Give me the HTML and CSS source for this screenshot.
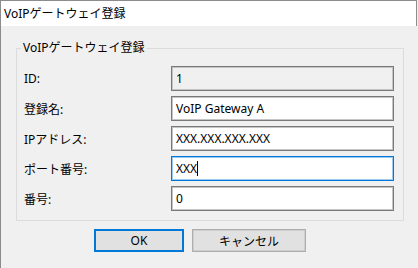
FILE: index.html
```html
<!DOCTYPE html>
<html lang="ja">
<head>
    <meta charset="UTF-8">
    <meta name="viewport" content="width=device-width, initial-scale=1.0">
    <title>VoIPゲートウェイ登録</title>
    <link rel="stylesheet" href="styles.css">
</head>
<body>
    <div class="window">
        <div class="titlebar">VoIPゲートウェイ登録</div>
        <div class="content">
            <fieldset class="group">
                <legend>VoIPゲートウェイ登録</legend>
                <div class="rows">
                    <label for="gwId">ID:</label>
                    <input id="gwId" class="field" type="text" value="1" readonly>

                    <label for="gwName">登録名:</label>
                    <input id="gwName" class="field" type="text" value="VoIP Gateway A">

                    <label for="gwIp">IPアドレス:</label>
                    <input id="gwIp" class="field" type="text" value="XXX.XXX.XXX.XXX">

                    <label for="gwPort">ポート番号:</label>
                    <div class="field focused" id="gwPort">XXX<span class="caret"></span></div>

                    <label for="gwNo">番号:</label>
                    <input id="gwNo" class="field" type="text" value="0">
                </div>
            </fieldset>
            <div class="buttons">
                <button class="btn btn-ok">OK</button>
                <button class="btn btn-cancel">キャンセル</button>
            </div>
        </div>
    </div>
</body>
</html>
```

FILE: styles.css
```css
* {
    margin: 0;
    padding: 0;
    box-sizing: border-box;
}

body {
    width: 418px;
    height: 268px;
    overflow: hidden;
    background: #f0f0f0;
    font-family: "Noto Sans", "Noto Sans CJK JP", sans-serif;
    font-size: 12px;
    color: #000;
}

.window {
    height: 268px;
    border-left: 1px solid #8c8c8c;
}

.titlebar {
    height: 26px;
    width: 416px;
    background: #fff;
    border-top: 1px solid #8c8c8c;
    border-right: 1px solid #8c8c8c;
    padding: 3px 0 0 3px;
    line-height: 20px;
}

.content {
    padding-top: 15px;
}

.group {
    margin-left: 15px;
    width: 388px;
    border: 1px solid #dcdcdc;
    padding: 0;
}

.group legend {
    margin-left: 4px;
    padding: 0 2px;
    line-height: 14px;
}

.rows {
    display: grid;
    grid-template-columns: 147px 223px;
    row-gap: 5px;
    align-items: center;
    padding: 11px 9px 9px 7px;
}

.field {
    height: 25px;
    border: 1px solid #7a7a7a;
    box-shadow: inset 0 0 0 1px #c4c4c4;
    background: #fff;
    padding: 0 4px;
    font: inherit;
    color: #000;
    line-height: 23px;
    outline: none;
}

.field[readonly] {
    background: #f0f0f0;
}

.field.focused {
    border-color: #0078d7;
    box-shadow: inset 0 0 0 1px #9ccaf0;
}

.caret {
    display: inline-block;
    width: 1px;
    height: 15px;
    background: #000;
    vertical-align: -3px;
}

.buttons {
    display: flex;
    gap: 8px;
    margin: 8px 0 0 93px;
}

.btn {
    height: 23px;
    background: #e1e1e1;
    border: 1px solid #adadad;
    box-shadow: inset 0 0 0 1px #cfcfcf;
    font: inherit;
    color: #000;
}

.btn-ok {
    width: 90px;
    border: 2px solid #0078d7;
    box-shadow: none;
}

.btn-cancel {
    width: 114px;
}
```
